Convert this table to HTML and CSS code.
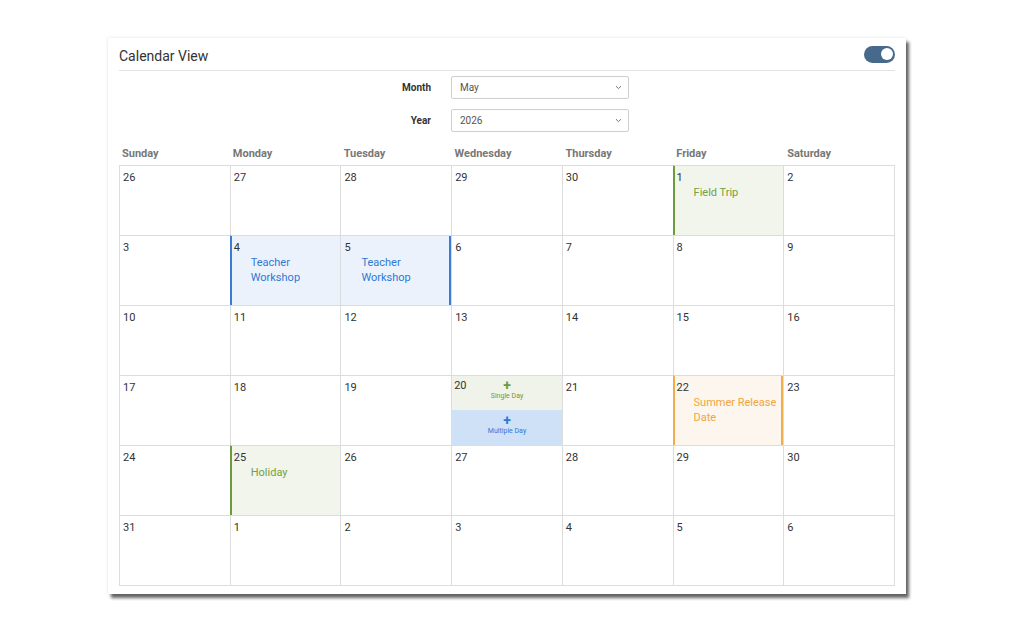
FILE: index.html
```html
<!DOCTYPE html>
<html>
<head>
<meta charset="utf-8">
<link rel="stylesheet" href="styles.css">
</head>
<body>
<div class="panel">
  <div class="panel-head">
    <h1 class="title">Calendar View</h1>
    <div class="toggle"><span class="knob"></span></div>
  </div>
  <div class="form">
    <label class="flabel">Month</label>
    <div class="select"><span>May</span><svg width="7" height="5" viewBox="0 0 7 5"><path d="M1 1.2 L3.5 3.6 L6 1.2" fill="none" stroke="#777" stroke-width="1"/></svg></div>
    <label class="flabel">Year</label>
    <div class="select"><span>2026</span><svg width="7" height="5" viewBox="0 0 7 5"><path d="M1 1.2 L3.5 3.6 L6 1.2" fill="none" stroke="#777" stroke-width="1"/></svg></div>
  </div>
  <div class="dow">
    <div>Sunday</div><div>Monday</div><div>Tuesday</div><div>Wednesday</div><div>Thursday</div><div>Friday</div><div>Saturday</div>
  </div>
  <div class="grid">
    <div class="cell"><span class="d">26</span></div>
    <div class="cell"><span class="d">27</span></div>
    <div class="cell"><span class="d">28</span></div>
    <div class="cell"><span class="d">29</span></div>
    <div class="cell"><span class="d">30</span></div>
    <div class="cell ev green"><span class="d">1</span><span class="et">Field Trip</span></div>
    <div class="cell"><span class="d">2</span></div>

    <div class="cell"><span class="d">3</span></div>
    <div class="cell ev blue"><span class="d">4</span><span class="et">Teacher<br>Workshop</span></div>
    <div class="cell ev blue mid end"><span class="d">5</span><span class="et">Teacher<br>Workshop</span></div>
    <div class="cell"><span class="d">6</span></div>
    <div class="cell"><span class="d">7</span></div>
    <div class="cell"><span class="d">8</span></div>
    <div class="cell"><span class="d">9</span></div>

    <div class="cell"><span class="d">10</span></div>
    <div class="cell"><span class="d">11</span></div>
    <div class="cell"><span class="d">12</span></div>
    <div class="cell"><span class="d">13</span></div>
    <div class="cell"><span class="d">14</span></div>
    <div class="cell"><span class="d">15</span></div>
    <div class="cell"><span class="d">16</span></div>

    <div class="cell"><span class="d">17</span></div>
    <div class="cell"><span class="d">18</span></div>
    <div class="cell"><span class="d">19</span></div>
    <div class="cell split">
      <div class="half single">
        <span class="d">20</span>
        <div class="add"><span class="plus">+</span><span class="lbl">Single Day</span></div>
        <span></span>
      </div>
      <div class="half multi">
        <span></span>
        <div class="add"><span class="plus">+</span><span class="lbl">Multiple Day</span></div>
        <span></span>
      </div>
    </div>
    <div class="cell"><span class="d">21</span></div>
    <div class="cell ev orange end"><span class="d">22</span><span class="et">Summer Release Date</span></div>
    <div class="cell"><span class="d">23</span></div>

    <div class="cell"><span class="d">24</span></div>
    <div class="cell ev green"><span class="d">25</span><span class="et">Holiday</span></div>
    <div class="cell"><span class="d">26</span></div>
    <div class="cell"><span class="d">27</span></div>
    <div class="cell"><span class="d">28</span></div>
    <div class="cell"><span class="d">29</span></div>
    <div class="cell"><span class="d">30</span></div>

    <div class="cell"><span class="d">31</span></div>
    <div class="cell"><span class="d">1</span></div>
    <div class="cell"><span class="d">2</span></div>
    <div class="cell"><span class="d">3</span></div>
    <div class="cell"><span class="d">4</span></div>
    <div class="cell"><span class="d">5</span></div>
    <div class="cell"><span class="d">6</span></div>
  </div>
</div>
</body>
</html>
```

FILE: styles.css
```css
* { box-sizing: border-box; }
html, body { margin: 0; padding: 0; background: #fff; }
body {
  font-family: Roboto, "Liberation Sans", sans-serif;
  color: #333;
  padding: 38px 0 24px 108px;
  min-height: 626px;
}
.panel {
  width: 798px;
  background: #fff;
  padding: 0 11px 8px;
  box-shadow: 3px 4px 3px rgba(0,0,0,0.6), 0 0 3px rgba(0,0,0,0.12);
}
.panel-head {
  height: 33px;
  border-bottom: 1px solid #e3e3e3;
  display: flex;
  align-items: center;
  justify-content: space-between;
  padding-top: 3px;
}
.title {
  margin: 0;
  font-size: 14px;
  font-weight: 400;
  color: #333;
}
.toggle {
  width: 31px;
  height: 17px;
  border-radius: 9px;
  background: #46698c;
  display: flex;
  align-items: center;
  justify-content: flex-end;
  padding-right: 2px;
  margin-top: -3px;
}
.knob {
  width: 12px;
  height: 12px;
  border-radius: 50%;
  background: #fff;
}
.form {
  display: grid;
  grid-template-columns: 312px 178px;
  column-gap: 20px;
  row-gap: 10px;
  margin-top: 5px;
  align-items: center;
}
.flabel {
  text-align: right;
  font-size: 10px;
  font-weight: 700;
  color: #333;
}
.select {
  height: 23px;
  border: 1px solid #cfcfcf;
  border-radius: 2px;
  display: flex;
  align-items: center;
  justify-content: space-between;
  padding: 0 6px 0 8px;
  font-size: 10px;
  color: #555;
}
.dow {
  display: grid;
  grid-template-columns: repeat(7, 1fr);
  padding: 15px 0 5px;
}
.dow div {
  font-size: 11px;
  font-weight: 700;
  color: #777;
  line-height: 13px;
  padding-left: 3px;
}
.grid {
  display: grid;
  grid-template-columns: repeat(7, 1fr);
  grid-auto-rows: 70px;
  border-right: 1px solid #dcdcdc;
  border-bottom: 1px solid #dcdcdc;
}
.cell {
  border-left: 1px solid #dcdcdc;
  border-top: 1px solid #dcdcdc;
  padding: 5px 3px;
  display: flex;
  flex-direction: column;
}
.d {
  font-size: 11px;
  line-height: 13px;
  color: #333;
}
.et {
  font-size: 11px;
  line-height: 15px;
  padding-left: 17px;
  margin-top: 1px;
}
.ev { padding-left: 3px; }
.green { background: #f1f5ec; border-left-color: #6b9b3d; box-shadow: inset 1px 0 0 #6b9b3d; }
.green .et { color: #72a044; }
.blue { background: #ebf2fc; border-left-color: #3a7bd5; box-shadow: inset 1px 0 0 #3a7bd5; }
.blue .et { color: #2f78d6; }
.blue.mid { border-left-color: #dcdcdc; box-shadow: inset -2px 0 0 #3a7bd5; }
.orange { background: #fcf6ee; border-left-color: #f0ad4e; box-shadow: inset 1px 0 0 #f0ad4e, inset -2px 0 0 #f0ad4e; }
.orange .et { color: #f0a53f; }
.split { padding: 0; }
.half {
  flex: 1;
  display: grid;
  grid-template-columns: 1fr auto 1fr;
  padding: 3px 2px 0 2px;
}
.single { background: #eff3ea; }
.multi { background: #cfe1f6; }
.add {
  display: flex;
  flex-direction: column;
  align-items: center;
}
.plus {
  font-size: 14px;
  line-height: 12px;
  font-weight: 700;
}
.lbl {
  font-size: 7px;
  line-height: 10px;
  margin-top: 0;
}
.single .plus, .single .lbl { color: #6b9b3d; }
.multi .plus, .multi .lbl { color: #2f78d6; }
.multi { padding-top: 4px; }
```
